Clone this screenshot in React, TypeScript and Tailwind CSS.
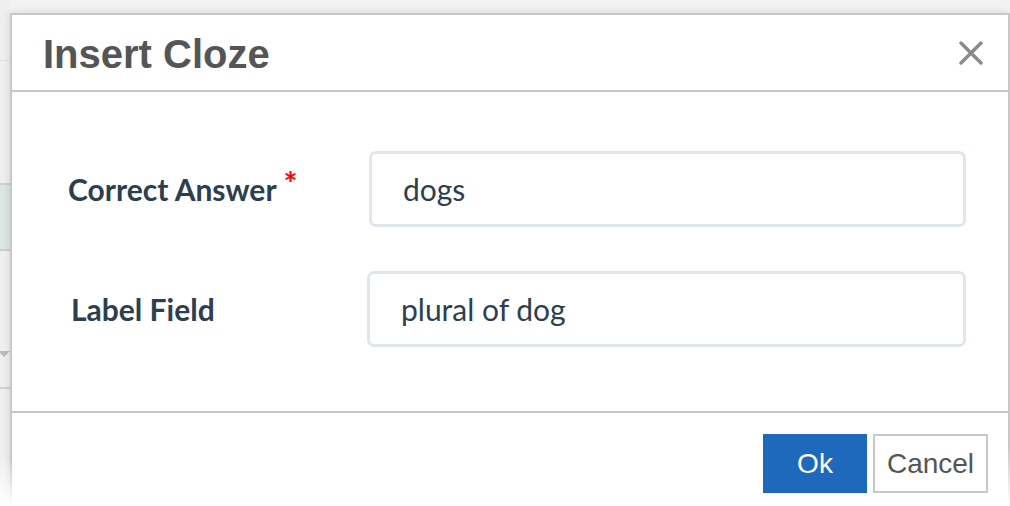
import { useState } from 'react';

const lato = { fontFamily: 'Lato, "Open Sans", sans-serif' };

function CloseIcon() {
  return (
    <svg width="24" height="24" viewBox="0 0 24 24" className="text-[#8a8a8a]">
      <path d="M2 2 L22 22 M22 2 L2 22" stroke="currentColor" strokeWidth="3.4" strokeLinecap="round" />
    </svg>
  );
}

export default function App() {
  const [answer, setAnswer] = useState('dogs');
  const [label, setLabel] = useState('plural of dog');

  return (
    <div className="relative w-[1010px] h-[506px] overflow-hidden bg-[#f2f2f2] flex font-['Liberation_Sans',Arial,sans-serif]">
      {/* page behind the dialog */}
      <div className="w-[10px] flex flex-col pt-[60px] bg-[#efefef]">
        <div className="h-[123px] border-t border-[#e2e2e2]" />
        <div className="h-[68px] border-y-2 border-[#cfcfcf] bg-[#dce6e2]" />
        <div className="h-[136px] flex flex-col justify-end pb-[30px]">
          <div className="w-0 h-0 border-x-[6px] border-x-transparent border-t-[6px] border-t-[#bbb] ml-[-2px]" />
        </div>
        <div className="flex-1 border-t-2 border-[#d0d0d0]" />
      </div>

      {/* dialog */}
      <div className="flex-1 mt-[13px] flex flex-col bg-white border-2 border-b-0 border-[#c8c8c8] shadow-[0_0_8px_rgba(0,0,0,0.12)]">
        <div className="h-[77px] shrink-0 flex items-center justify-between pl-[31px] pr-[25px] border-b-2 border-[#c8c8c8]">
          <h1 className="text-[40px] font-bold text-[#555] leading-none pt-[2px]">Insert Cloze</h1>
          <button className="p-0 mt-[1px]">
            <CloseIcon />
          </button>
        </div>

        <div className="h-[321px] shrink-0 flex flex-col gap-[44px] pt-[59px] pr-[42px] border-b-2 border-[#c8c8c8]" style={lato}>
          <div className="flex items-center">
            <label className="w-[357px] pl-[56px] text-[30px] font-bold text-[#2c3e50]">
              Correct Answer<span className="text-[#f00] text-[33px] font-bold ml-[7px] relative top-[-5px]">*</span>
            </label>
            <input
              value={answer}
              onChange={e => setAnswer(e.target.value)}
              className="flex-1 h-[76px] px-[31px] border-[3px] border-[#dfe6ee] rounded-[7px] text-[30px] text-[#2c3e50] outline-none"
            />
          </div>
          <div className="flex items-center">
            <label className="w-[355px] pl-[59px] text-[30px] font-bold text-[#2c3e50]">Label Field</label>
            <input
              value={label}
              onChange={e => setLabel(e.target.value)}
              className="flex-1 h-[76px] px-[31px] border-[3px] border-[#dfe6ee] rounded-[7px] text-[30px] text-[#2c3e50] outline-none"
            />
          </div>
        </div>

        <div className="flex justify-end gap-[6px] pt-[21px] pr-[20px]">
          <button className="w-[104px] h-[59px] bg-[#1f69bd] text-white text-[28px]">Ok</button>
          <button className="w-[115px] h-[59px] border-2 border-[#c8c8c8] bg-white text-[#555] text-[28px]">Cancel</button>
        </div>
      </div>

      {/* fade at the bottom edges of the shot */}
      <div className="absolute left-0 w-[14px] bottom-0 h-[48px] bg-linear-to-b from-white/0 to-white" />
      <div className="absolute right-0 w-[4px] bottom-0 h-[60px] bg-linear-to-b from-white/0 to-white" />
    </div>
  );
}
